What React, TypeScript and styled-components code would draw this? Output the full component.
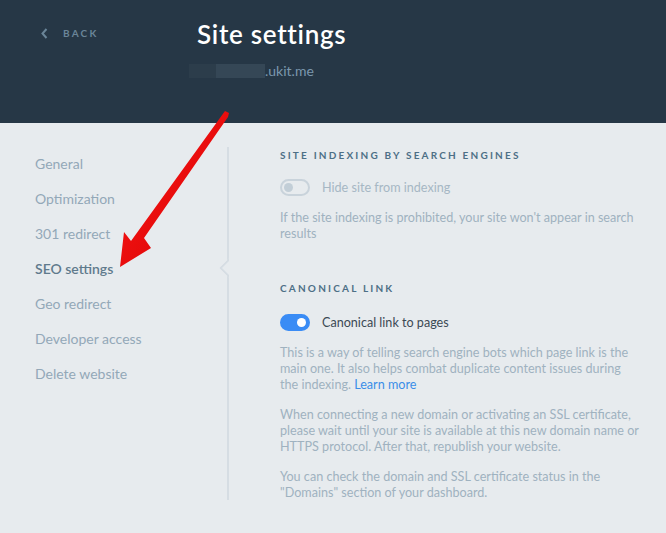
import styled, { createGlobalStyle } from "styled-components";

const GlobalStyle = createGlobalStyle`
  html, body {
    margin: 0;
    padding: 0;
    background: #e7ebee;
    font-family: "Lato", "Open Sans", sans-serif;
  }
`;

const Page = styled.div`
  position: relative;
  width: 666px;
  height: 533px;
  overflow: hidden;
  background: #e7ebee;
`;

const Header = styled.header`
  height: 123px;
  background: #263746;
  display: grid;
  grid-template-columns: 197px 1fr;
`;

const Back = styled.a`
  display: flex;
  align-items: center;
  gap: 15px;
  padding: 27px 0 0 41px;
  align-self: start;
  color: #6a8598;
  font-size: 10px;
  font-weight: 700;
  letter-spacing: 2.2px;
  text-decoration: none;
`;

const TitleBlock = styled.div`
  padding-top: 19px;
`;

const Title = styled.h1`
  margin: 0;
  color: #ffffff;
  font-size: 26px;
  font-weight: 600;
  letter-spacing: 0.7px;
  line-height: 30px;
`;

const Domain = styled.div`
  display: flex;
  align-items: center;
  margin: 13px 0 0 -8px;
  color: #7b98ae;
  font-size: 14px;
`;

const Blur = styled.span<{ $w: number; $c: string }>`
  display: inline-block;
  width: ${(p) => p.$w}px;
  height: 14px;
  background: ${(p) => p.$c};
`;

const Body = styled.div`
  display: grid;
  grid-template-columns: 229px 1fr;
  padding-top: 24px;
`;

const Nav = styled.nav`
  display: flex;
  flex-direction: column;
  padding: 0 0 0 35px;
  position: relative;
  height: 353px;
  border-right: 2px solid #d6dde3;
`;

const Notch = styled.span`
  position: absolute;
  right: -2px;
  top: 114px;
  width: 12px;
  height: 12px;
  background: #e7ebee;
  border-left: 2px solid #d6dde3;
  border-bottom: 2px solid #d6dde3;
  transform: translateX(50%) rotate(45deg);
  clip-path: polygon(0 0, 100% 100%, 0 100%);
`;

const NavItem = styled.a<{ $active?: boolean }>`
  display: block;
  height: 35px;
  line-height: 33px;
  font-size: 14px;
  color: ${(p) => (p.$active ? "#5f7a8c" : "#93a8b8")};
  font-weight: ${(p) => (p.$active ? 600 : 400)};
  text-decoration: none;
`;

const Content = styled.main`
  padding: 0 0 0 51px;
  width: 362px;
`;

const SectionTitle = styled.h2`
  margin: 0;
  font-size: 10px;
  font-weight: 700;
  letter-spacing: 2.2px;
  color: #4d6f86;
  text-transform: uppercase;
  line-height: 16px;
`;

const ToggleRow = styled.label<{ $gap?: number }>`
  display: flex;
  align-items: center;
  gap: 12px;
  margin-top: ${(p) => p.$gap ?? 16}px;
  font-size: 12.6px;
`;

const Switch = styled.span<{ $on?: boolean }>`
  position: relative;
  box-sizing: border-box;
  width: 30px;
  height: 17px;
  border-radius: 9px;
  background: ${(p) => (p.$on ? "#3a8cf5" : "transparent")};
  border: 2px solid ${(p) => (p.$on ? "#3a8cf5" : "#c9d3db")};
  &::after {
    content: "";
    position: absolute;
    top: 2px;
    left: ${(p) => (p.$on ? "15px" : "2px")};
    width: 9px;
    height: 9px;
    border-radius: 50%;
    background: ${(p) => (p.$on ? "#ffffff" : "#c2ced7")};
  }
`;

const ToggleLabel = styled.span<{ $on?: boolean }>`
  color: ${(p) => (p.$on ? "#3b4954" : "#a6b7c4")};
`;

const Text = styled.p`
  margin: 14px 0 0;
  font-size: 12.6px;
  line-height: 16px;
  color: #9fb2c0;
`;

const LearnMore = styled.a`
  color: #3b8ee8;
  text-decoration: none;
`;

const Section = styled.section<{ $gap?: number }>`
  margin-top: ${(p) => p.$gap ?? 0}px;
`;

const Arrow = styled.svg`
  position: absolute;
  left: 0;
  top: 0;
  pointer-events: none;
`;

export default function App() {
  const items = [
    "General",
    "Optimization",
    "301 redirect",
    "SEO settings",
    "Geo redirect",
    "Developer access",
    "Delete website",
  ];
  return (
    <Page>
      <GlobalStyle />
      <Header>
        <Back href="#">
          <svg width="7" height="11" viewBox="0 0 7 11">
            <path d="M5.5 1 L1.5 5.5 L5.5 10" fill="none" stroke="#6a8598" strokeWidth="2" />
          </svg>
          BACK
        </Back>
        <TitleBlock>
          <Title>Site settings</Title>
          <Domain>
            <Blur $w={27} $c="#2c3d4b" />
            <Blur $w={49} $c="#354756" />
            .ukit.me
          </Domain>
        </TitleBlock>
      </Header>
      <Body>
        <Nav>
          {items.map((it) => (
            <NavItem key={it} href="#" $active={it === "SEO settings"}>
              {it}
            </NavItem>
          ))}
          <Notch />
        </Nav>
        <Content>
          <Section>
            <SectionTitle>Site indexing by search engines</SectionTitle>
            <ToggleRow>
              <Switch />
              <ToggleLabel>Hide site from indexing</ToggleLabel>
            </ToggleRow>
            <Text>
              If the site indexing is prohibited, your site won't appear in search results
            </Text>
          </Section>
          <Section $gap={38}>
            <SectionTitle>Canonical link</SectionTitle>
            <ToggleRow $gap={18}>
              <Switch $on />
              <ToggleLabel $on>Canonical link to pages</ToggleLabel>
            </ToggleRow>
            <Text>
              This is a way of telling search engine bots which page link is the main one. It
              also helps combat duplicate content issues during the indexing.{" "}
              <LearnMore href="#">Learn more</LearnMore>
            </Text>
            <Text>
              When connecting a new domain or activating an SSL certificate, please wait until
              your site is available at this new domain name or HTTPS protocol. After that,
              republish your website.
            </Text>
            <Text>
              You can check the domain and SSL certificate status in the "Domains" section of
              your dashboard.
            </Text>
          </Section>
        </Content>
      </Body>
      <Arrow width="666" height="533" viewBox="0 0 666 533">
        <defs>
          <linearGradient id="ag" x1="0" y1="0" x2="1" y2="1">
            <stop offset="0" stopColor="#ff1a1a" />
            <stop offset="1" stopColor="#d40000" />
          </linearGradient>
        </defs>
        <path
          d="M229 113 L228 117 L144 238 L151 248 L120 267 L124 232 L131 241 L225 111 Z"
          fill="url(#ag)"
        />
      </Arrow>
    </Page>
  );
}
